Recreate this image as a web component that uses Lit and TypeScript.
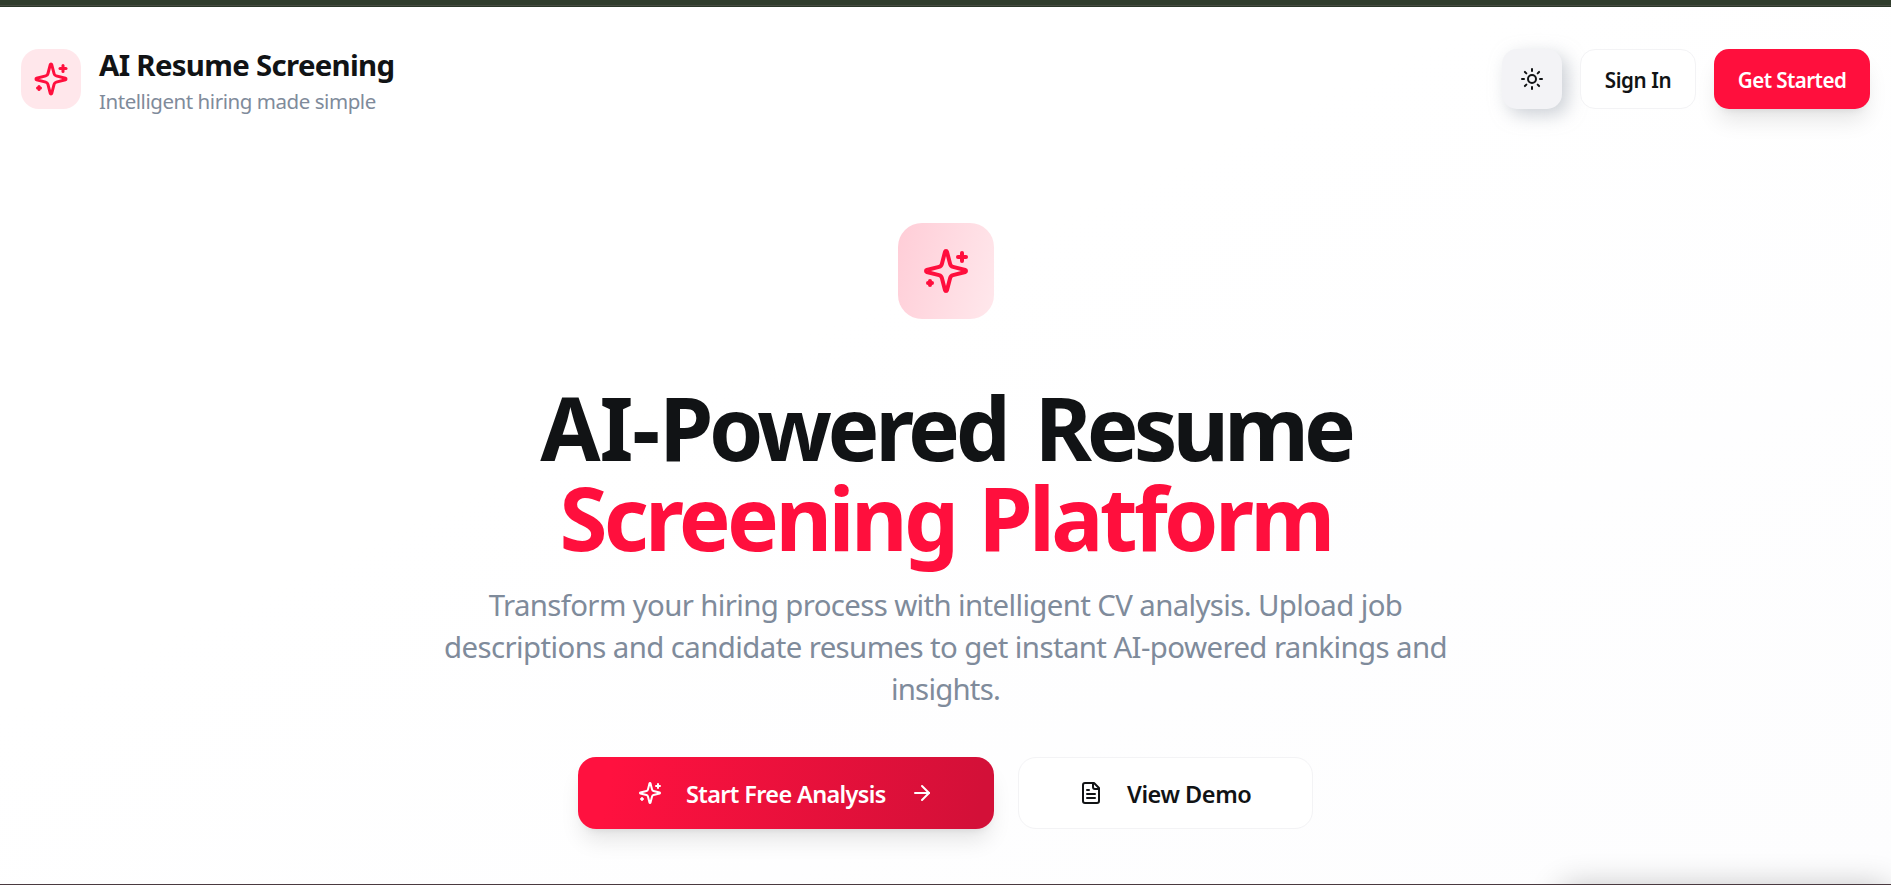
import { LitElement, html, svg, css } from "lit";
import { customElement, property } from "lit/decorators.js";

const glyphs = {
  sparkles: svg`<path d="M9.937 15.5A2 2 0 0 0 8.5 14.063l-6.135-1.582a.5.5 0 0 1 0-.962L8.5 9.936A2 2 0 0 0 9.937 8.5l1.582-6.135a.5.5 0 0 1 .963 0L14.063 8.5A2 2 0 0 0 15.5 9.937l6.135 1.581a.5.5 0 0 1 0 .964L15.5 14.063a2 2 0 0 0-1.437 1.437l-1.582 6.135a.5.5 0 0 1-.963 0z"/><path d="M20 3v4"/><path d="M22 5h-4"/><path d="M4 17v2"/><path d="M5 18H3"/>`,
  sun: svg`<circle cx="12" cy="12" r="4"/><path d="M12 2v2"/><path d="M12 20v2"/><path d="m4.93 4.93 1.41 1.41"/><path d="m17.66 17.66 1.41 1.41"/><path d="M2 12h2"/><path d="M20 12h2"/><path d="m6.34 17.66-1.41 1.41"/><path d="m19.07 4.93-1.41 1.41"/>`,
  arrow: svg`<path d="M5 12h14"/><path d="m12 5 7 7-7 7"/>`,
  file: svg`<path d="M15 2H6a2 2 0 0 0-2 2v16a2 2 0 0 0 2 2h12a2 2 0 0 0 2-2V7Z"/><path d="M14 2v4a2 2 0 0 0 2 2h4"/><path d="M10 9H8"/><path d="M16 13H8"/><path d="M16 17H8"/>`,
};

@customElement("ui-icon")
export class UiIcon extends LitElement {
  @property() name: keyof typeof glyphs = "sparkles";
  static styles = css`
    :host { display: block; width: 24px; height: 24px; flex: none; }
    svg { display: block; width: 100%; height: 100%; fill: none; stroke: currentColor; stroke-width: 2; stroke-linecap: round; stroke-linejoin: round; }
  `;
  render() {
    return html`<svg viewBox="0 0 24 24">${glyphs[this.name]}</svg>`;
  }
}

@customElement("app-root")
export class AppRoot extends LitElement {
  static styles = css`
    :host {
      display: flex; flex-direction: column; height: 885px; box-sizing: border-box; overflow: hidden;
      position: relative; color: #111315; font-family: "Noto Sans", "Open Sans", sans-serif;
      background: linear-gradient(to bottom right, #fff 40%, #fdfdfe);
      border-bottom: 1px solid #4a3a40; white-space: nowrap;
    }
    .strip { height: 7px; flex: none; box-sizing: border-box; background: linear-gradient(#303d2d 5px, #454a40 5px, #454a40 6px, #2b3729 6px); }
    header { display: flex; align-items: flex-start; padding: 42px 21px 0; height: 102px; box-sizing: border-box; flex: none; }
    .logo { display: grid; place-items: center; width: 60px; height: 60px; border-radius: 18px; background: #ffe7eb; color: #ff0f3d; }
    .logo ui-icon { width: 36px; height: 36px; }
    .brand { margin: -4px 0 0 18px; }
    .name { font-size: 29.4px; line-height: 40px; font-weight: 700; letter-spacing: -0.69px; }
    .tag { font-size: 20.5px; line-height: 32px; color: #7f8b9b; letter-spacing: -0.45px; }
    .actions { margin-left: auto; display: flex; gap: 18px; }
    .btn { box-sizing: border-box; height: 60px; border-radius: 15px; display: flex; align-items: center; justify-content: center; font-size: 20.6px; font-weight: 560; line-height: 28px; }
    .btn span { padding-top: 2px; }
    .theme { width: 60px; background: #f3f3f6; box-shadow: 6px 6px 18px rgba(163, 170, 180, 0.55), -6px -6px 18px rgba(255, 255, 255, 0.8); }
    .signin { width: 116px; border: 1px solid #f3f3f5; background: #fff; letter-spacing: -0.4px; }
    .start { width: 156px; background: #ff0f3d; color: #fff; letter-spacing: -0.57px; box-shadow: 0 15px 22px -4px rgba(0, 0, 0, 0.1), 0 6px 9px -6px rgba(0, 0, 0, 0.1); }
    main { display: flex; flex-direction: column; align-items: center; padding-top: 114px; }
    .hero { display: grid; place-items: center; width: 96px; height: 96px; border-radius: 24px; background: linear-gradient(105deg, #ffcdd7, #ffe8ec); color: #ff0f3d; margin-left: 1px; }
    .hero ui-icon { width: 48px; height: 48px; }
    h1 { margin: 63.5px 0 0; font-size: 87.2px; line-height: 90px; font-weight: 700; text-align: center; }
    .row { display: block; }
    .first { letter-spacing: -4.4px; word-spacing: 10px; }
    .lead-in { letter-spacing: -1px; }
    .tail { letter-spacing: -5.1px; }
    .accent { color: #ff0f3d; letter-spacing: -3.65px; word-spacing: 4px; }
    .lead { margin: 21.5px 0 0; font-size: 29.4px; line-height: 42px; color: #7f8b9b; text-align: center; }
    .lead span { display: block; }
    .l1 { letter-spacing: -0.628px; }
    .l2 { letter-spacing: -0.594px; }
    .l3 { letter-spacing: -0.79px; }
    .cta { display: flex; gap: 24px; margin-top: 47px; }
    .big { box-sizing: border-box; height: 72px; border-radius: 18px; display: flex; align-items: center; font-size: 23.5px; font-weight: 560; line-height: 36px; }
    .big span { padding-top: 2px; }
    .primary { width: 416px; padding-left: 60px; color: #fff; letter-spacing: -0.64px; background: linear-gradient(100deg, #ff113f 8%, #d31038 96%); box-shadow: 0 15px 22px -4px rgba(0, 0, 0, 0.1), 0 6px 9px -6px rgba(0, 0, 0, 0.1); }
    .primary span { width: 200px; margin: 0 24px 0 24px; }
    .secondary { width: 295px; padding-left: 60px; border: 1px solid #f3f3f5; background: #fff; letter-spacing: -0.45px; }
    .secondary span { margin-left: 24px; }
    .toast { position: absolute; left: 1560px; top: 886px; width: 330px; height: 60px; border-radius: 12px; box-shadow: 0 0 32px rgba(0, 0, 0, 0.24); }
  `;

  render() {
    return html`
      <div class="strip"></div>
      <header>
        <div class="logo"><ui-icon name="sparkles"></ui-icon></div>
        <div class="brand">
          <div class="name">AI Resume Screening</div>
          <div class="tag">Intelligent hiring made simple</div>
        </div>
        <div class="actions">
          <div class="btn theme"><ui-icon name="sun"></ui-icon></div>
          <div class="btn signin"><span>Sign In</span></div>
          <div class="btn start"><span>Get Started</span></div>
        </div>
      </header>
      <main>
        <div class="hero"><ui-icon name="sparkles"></ui-icon></div>
        <h1><span class="row first"><span class="lead-in">AI-</span>Powered <span class="tail">Resume</span></span><span class="row accent">Screening Platform</span></h1>
        <p class="lead">
          <span class="l1">Transform your hiring process with intelligent CV analysis. Upload job</span>
          <span class="l2">descriptions and candidate resumes to get instant AI-powered rankings and</span>
          <span class="l3">insights.</span>
        </p>
        <div class="cta">
          <div class="big primary"><ui-icon name="sparkles"></ui-icon><span>Start Free Analysis</span><ui-icon name="arrow"></ui-icon></div>
          <div class="big secondary"><ui-icon name="file"></ui-icon><span>View Demo</span></div>
        </div>
      </main>
      <div class="toast"></div>
    `;
  }
}
